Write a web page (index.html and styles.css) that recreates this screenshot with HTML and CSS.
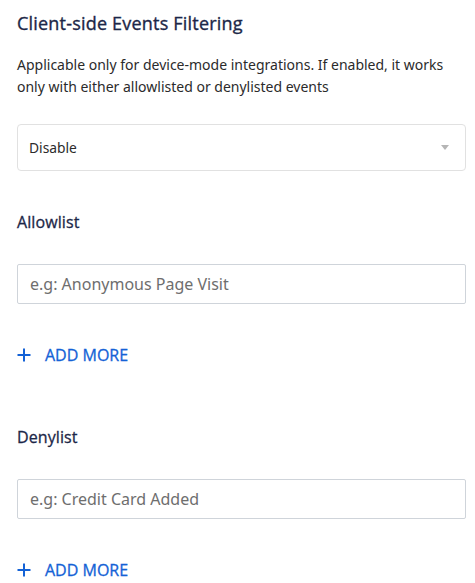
FILE: index.html
```html
<!DOCTYPE html>
<html>
<head>
<meta charset="utf-8">
<link rel="stylesheet" href="styles.css">
</head>
<body>
<div class="panel">
  <h2 class="title">Client-side Events Filtering</h2>
  <p class="desc">Applicable only for device-mode integrations. If enabled, it works only with either allowlisted or denylisted events</p>
  <div class="select">
    <span class="select-value">Disable</span>
    <span class="caret"></span>
  </div>

  <div class="group">
    <div class="label">Allowlist</div>
    <input class="field" type="text" placeholder="e.g: Anonymous Page Visit">
    <button class="add">
      <svg width="14" height="14" viewBox="0 0 14 14"><path d="M7 0.5V13.5M0.5 7H13.5" stroke="currentColor" stroke-width="2"/></svg>
      <span>ADD MORE</span>
    </button>
  </div>

  <div class="group">
    <div class="label">Denylist</div>
    <input class="field" type="text" placeholder="e.g: Credit Card Added">
    <button class="add">
      <svg width="14" height="14" viewBox="0 0 14 14"><path d="M7 0.5V13.5M0.5 7H13.5" stroke="currentColor" stroke-width="2"/></svg>
      <span>ADD MORE</span>
    </button>
  </div>
</div>
</body>
</html>
```
FILE: styles.css
```css
* { box-sizing: border-box; }
body {
  margin: 0;
  background: #fff;
  font-family: "Noto Sans", "Open Sans", sans-serif;
}
.panel {
  padding: 10px 9px 0 17px;
}
.title {
  margin: 0;
  font-family: "Open Sans", "Noto Sans", sans-serif;
  font-size: 18px;
  font-weight: 400;
  letter-spacing: 0.2px;
  -webkit-text-stroke: 0.35px #1c2748;
  color: #1c2748;
  line-height: 26px;
}
.desc {
  margin: 18px 0 0;
  font-size: 14px;
  line-height: 22px;
  color: #2b2b2b;
}
.select {
  margin-top: 26px;
  height: 47px;
  border: 1px solid #e1e1e1;
  border-radius: 4px;
  display: flex;
  align-items: center;
  justify-content: space-between;
  padding: 0 16px 0 11px;
}
.select-value {
  font-size: 13.8px;
  color: #2b2b2b;
}
.caret {
  width: 0;
  height: 0;
  border-left: 4px solid transparent;
  border-right: 4px solid transparent;
  border-top: 5px solid #b5b5b5;
}
.group {
  margin-top: 39px;
}
.group + .group {
  margin-top: 59px;
}
.label {
  font-family: "Open Sans", "Noto Sans", sans-serif;
  font-size: 16px;
  font-weight: 400;
  letter-spacing: 0.1px;
  -webkit-text-stroke: 0.3px #1c2748;
  color: #1c2748;
  line-height: 24px;
}
.field {
  display: block;
  width: 100%;
  margin-top: 30px;
  height: 40px;
  border: 1px solid #cfd4da;
  border-radius: 2px;
  padding: 0 12px;
  font-family: inherit;
  font-size: 16px;
  color: #2b2b2b;
  outline: none;
}
.field::placeholder { color: #6e6e6e; }
.add {
  margin-top: 40px;
  padding: 0;
  border: 0;
  background: none;
  display: flex;
  align-items: center;
  gap: 14px;
  color: #1462d6;
  font-family: "Open Sans", "Noto Sans", sans-serif;
  font-size: 16px;
  font-weight: 400;
  -webkit-text-stroke: 0.3px #1462d6;
  cursor: pointer;
}
```
